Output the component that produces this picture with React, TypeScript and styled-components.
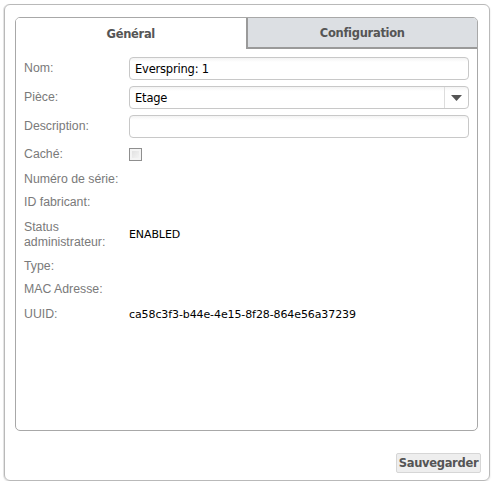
import styled, { createGlobalStyle } from "styled-components";

const GlobalStyle = createGlobalStyle`
  html, body {
    margin: 0;
    padding: 0;
    background: #ffffff;
    font-family: "Liberation Sans", Arial, sans-serif;
  }
`;

type Field = {
  label: string;
  height: number;
  kind: "input" | "select" | "checkbox" | "text";
  value?: string;
};

const fields: Field[] = [
  { label: "Nom:", height: 29, kind: "input", value: "Everspring: 1" },
  { label: "Pièce:", height: 29, kind: "select", value: "Etage" },
  { label: "Description:", height: 29, kind: "input", value: "" },
  { label: "Caché:", height: 27, kind: "checkbox" },
  { label: "Numéro de série:", height: 23, kind: "text", value: "" },
  { label: "ID fabricant:", height: 23, kind: "text", value: "" },
  { label: "Status administrateur:", height: 41, kind: "text", value: "ENABLED" },
  { label: "Type:", height: 23, kind: "text", value: "" },
  { label: "MAC Adresse:", height: 23, kind: "text", value: "" },
  { label: "UUID:", height: 26, kind: "text", value: "ca58c3f3-b44e-4e15-8f28-864e56a37239" },
];

const App = () => {
  return (
    <>
      <GlobalStyle />
      <Page>
        <Window>
          <TabPanel>
            <Tabs>
              <Tab $active>Général</Tab>
              <Tab>Configuration</Tab>
            </Tabs>
            <Form>
              {fields.map((f) => (
                <Row key={f.label} $height={f.height}>
                  <Label>{f.label}</Label>
                  {f.kind === "input" && <TextInput type="text" defaultValue={f.value} />}
                  {f.kind === "select" && (
                    <Select>
                      <SelectValue>{f.value}</SelectValue>
                      <SelectArrow>
                        <svg width="11" height="6" viewBox="0 0 11 6">
                          <path d="M0 0 H11 L5.5 6 Z" fill="#555" />
                        </svg>
                      </SelectArrow>
                    </Select>
                  )}
                  {f.kind === "checkbox" && <Checkbox />}
                  {f.kind === "text" && <Value>{f.value}</Value>}
                </Row>
              ))}
            </Form>
          </TabPanel>
          <Footer>
            <SaveButton>Sauvegarder</SaveButton>
          </Footer>
        </Window>
      </Page>
    </>
  );
};

export default App;

const Page = styled.div`
  box-sizing: border-box;
  padding: 4px;
  width: 491px;
  height: 481px;
`;

const Window = styled.div`
  box-sizing: border-box;
  width: 486px;
  height: 477px;
  border: 1px solid #b9b9b9;
  border-radius: 6px;
  box-shadow: -1px 0 0 #e4e4e4, 0 1px 2px #dddddd;
  padding: 12px 8px 7px 10px;
  display: flex;
  flex-direction: column;
`;

const TabPanel = styled.div`
  box-sizing: border-box;
  height: 414px;
  margin-right: 3px;
  border: 1px solid #a8a8a8;
  border-radius: 5px;
  overflow: hidden;
  display: flex;
  flex-direction: column;
`;

const Tabs = styled.div`
  display: flex;
  height: 31px;
`;

const Tab = styled.div<{ $active?: boolean }>`
  flex: 1;
  display: flex;
  align-items: center;
  justify-content: center;
  font-family: "DejaVu Sans", Verdana, sans-serif;
  font-size: 11.5px;
  font-weight: bold;
  color: #555555;
  background: ${(p) => (p.$active ? "#ffffff" : "#dcdfe3")};
  border-left: ${(p) => (p.$active ? "none" : "2px solid #9a9a9a")};
  border-bottom: ${(p) => (p.$active ? "none" : "2px solid #9a9a9a")};
  letter-spacing: -0.3px;
`;

const Form = styled.div`
  padding: 5px 8px 0 8px;
  display: flex;
  flex-direction: column;
`;

const Row = styled.div<{ $height: number }>`
  display: grid;
  grid-template-columns: 105px 1fr;
  align-items: center;
  height: ${(p) => p.$height}px;
`;

const Label = styled.div`
  font-size: 12.3px;
  line-height: 15px;
  color: #7a7a7a;
  padding-right: 8px;
`;

const fieldBox = `
  box-sizing: border-box;
  height: 23px;
  border: 1px solid #c8c8c8;
  border-radius: 4px;
  background: linear-gradient(#f3f3f3 0, #ffffff 4px);
`;

const TextInput = styled.input`
  ${fieldBox}
  width: 100%;
  padding: 0 5px;
  font-family: "DejaVu Sans", Tahoma, sans-serif;
  font-size: 11.5px;
  letter-spacing: -0.2px;
  color: #000000;
  outline: none;
`;

const Select = styled.div`
  ${fieldBox}
  display: flex;
  align-items: stretch;
`;

const SelectValue = styled.div`
  flex: 1;
  display: flex;
  align-items: center;
  padding: 0 5px;
  font-family: "DejaVu Sans", Tahoma, sans-serif;
  font-size: 11.5px;
  letter-spacing: -0.2px;
  color: #000000;
`;

const SelectArrow = styled.div`
  width: 23px;
  border-left: 1px solid #dddddd;
  display: flex;
  align-items: center;
  justify-content: center;
`;

const Checkbox = styled.div`
  box-sizing: border-box;
  width: 13px;
  height: 13px;
  border: 1px solid #8f8f8f;
  background: linear-gradient(135deg, #dcdcdc, #f8f8f8);
  box-shadow: inset 0 0 0 2px #f4f4f4;
`;

const Value = styled.div`
  font-family: "DejaVu Sans", Tahoma, sans-serif;
  font-size: 11px;
  color: #000000;
  letter-spacing: -0.1px;
`;

const Footer = styled.div`
  flex: 1;
  display: flex;
  justify-content: flex-end;
  align-items: flex-end;
`;

const SaveButton = styled.button`
  box-sizing: border-box;
  height: 20px;
  width: 85px;
  padding: 0;
  border: 1px solid #d6d6d6;
  border-radius: 2px;
  background: #eeeeee;
  font-family: "DejaVu Sans", Verdana, sans-serif;
  font-size: 11.5px;
  font-weight: bold;
  color: #555555;
  letter-spacing: -0.3px;
`;
